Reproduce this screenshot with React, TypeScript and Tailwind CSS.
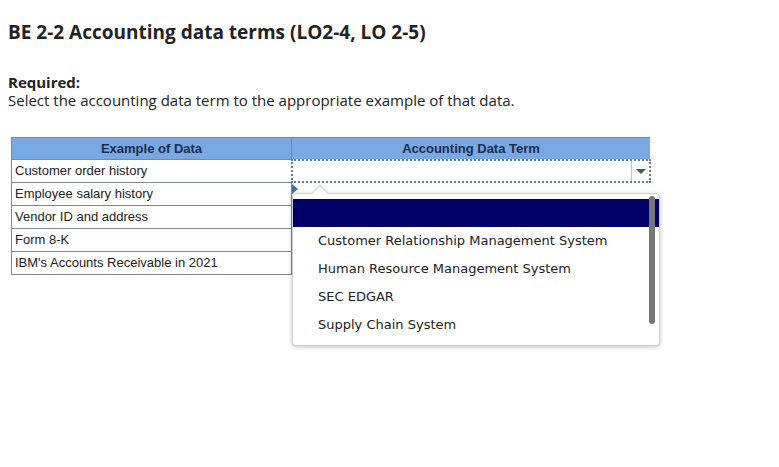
const rows = [
  'Customer order history',
  'Employee salary history',
  'Vendor ID and address',
  'Form 8-K',
  "IBM's Accounts Receivable in 2021",
]

const options = [
  '',
  'Customer Relationship Management System',
  'Human Resource Management System',
  'SEC EDGAR',
  'Supply Chain System',
]

function TermDropdown() {
  return (
    <div className="absolute left-[281px] top-[46px] w-[368px]">
      {/* little pointer on the left */}
      <div className="absolute left-0 top-[1px] h-0 w-0 border-y-[5px] border-l-[6px] border-y-transparent border-l-[#3f6fa6]" />
      <div className="relative mt-[10px] h-[153px] rounded-[4px] border border-[#cfcfcf] bg-white shadow-[0_1px_4px_rgba(0,0,0,0.25)]">
        {/* caret */}
        <div className="absolute -top-[7px] left-[21px] h-[12px] w-[12px] rotate-45 border-l border-t border-[#cfcfcf] bg-white" />
        <div className="relative pt-[5px] font-['DejaVu_Sans',Verdana,sans-serif] text-[13px] text-[#222]">
          {options.map((o, i) => (
            <div
              key={i}
              className={
                i === 0
                  ? 'h-[28px] bg-[#000066] pl-[25px] leading-[28px]'
                  : 'h-[28px] pl-[25px] leading-[28px]'
              }
            >
              {o}
            </div>
          ))}
          <div className="absolute right-[4px] top-[2px] h-[128px] w-[6px] rounded-full bg-[#777]" />
        </div>
      </div>
    </div>
  )
}

export default function App() {
  return (
    <div className="min-h-[467px] bg-white px-[8px] pt-[19px] text-[#1a1a1a]">
      <h1 className="font-['Open_Sans',sans-serif] text-[19px] font-bold leading-[26px] text-[#222]">
        BE 2-2 Accounting data terms (LO2-4, LO 2-5)
      </h1>
      <div className="mt-[28px] font-['Open_Sans',sans-serif] text-[15px] leading-[18px] text-[#222]">
        <p className="font-bold">Required:</p>
        <p>Select the accounting data term to the appropriate example of that data.</p>
      </div>

      <div className="relative ml-[3px] mt-[28px] w-[639px] font-['Liberation_Sans',Arial,sans-serif] text-[13px] text-[#222]">
        <div className="grid grid-cols-[280px_358px] border border-[#7c8894]">
          <div className="flex h-[22px] items-center justify-center border-r border-b border-[#7c8894] bg-[#78a9e3] font-bold text-[#1c2d4c]">
            Example of Data
          </div>
          <div className="flex h-[22px] items-center justify-center border-b border-[#7c8894] bg-[#78a9e3] font-bold text-[#1c2d4c]">
            Accounting Data Term
          </div>
          {rows.map((r, i) => (
            <div key={r} className="contents">
              <div
                className={
                  i < rows.length - 1
                    ? 'flex h-[23px] items-center border-r border-b border-[#7c8894] pl-[3px]'
                    : 'flex h-[22px] items-center border-r border-[#7c8894] pl-[3px]'
                }
              >
                {r}
              </div>
              {i === 0 ? (
                <div className="-mt-[1px] -mr-[1px] -ml-[1px] flex h-[24px] items-stretch border-2 border-dotted border-[#5d7f9c] bg-white">
                  <div className="flex-1" />
                  <div className="flex w-[18px] items-center justify-center border-l border-[#b8c4d0]">
                    <div className="h-0 w-0 border-x-[5px] border-t-[5px] border-x-transparent border-t-[#3d5670]" />
                  </div>
                </div>
              ) : (
                <div className="bg-white" />
              )}
            </div>
          ))}
        </div>
        <TermDropdown />
      </div>
    </div>
  )
}
